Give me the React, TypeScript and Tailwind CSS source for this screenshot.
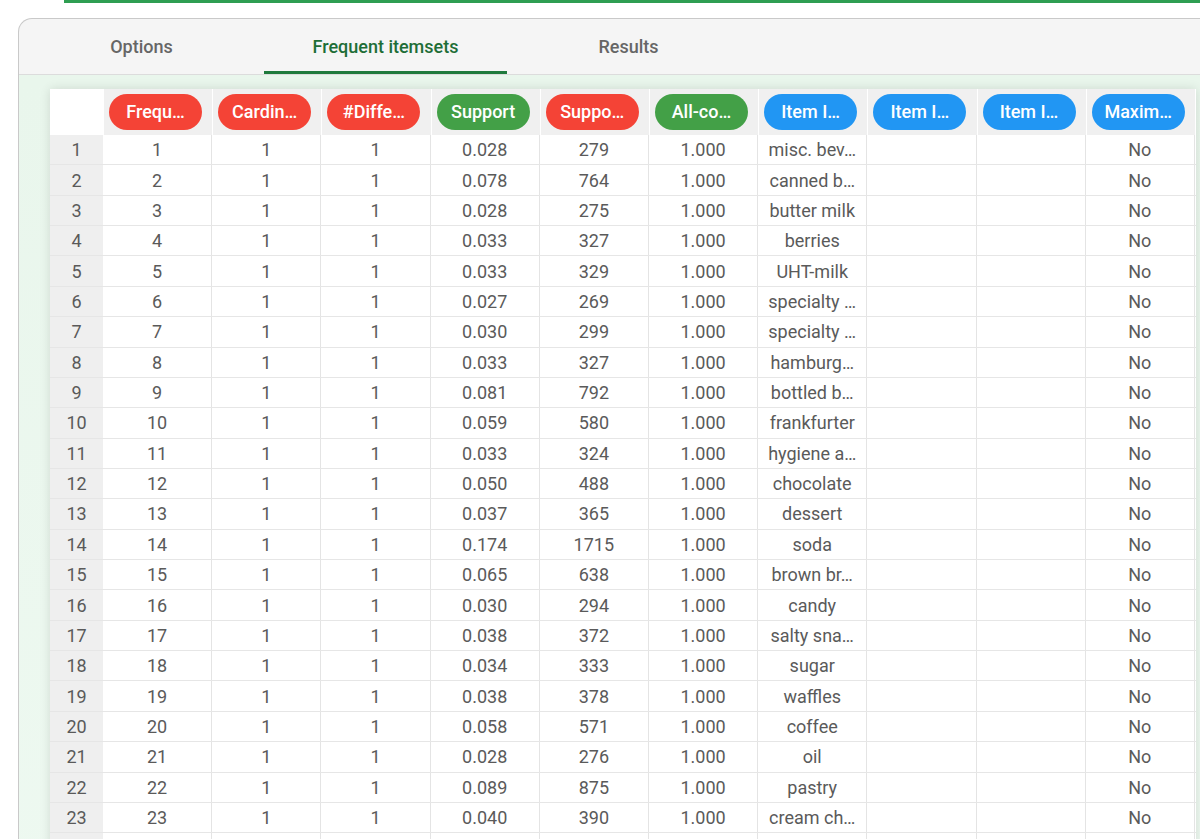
import React from 'react';

type Pill = { label: string; color: 'red' | 'green' | 'blue' };

const headers: Pill[] = [
  { label: 'Frequ…', color: 'red' },
  { label: 'Cardin…', color: 'red' },
  { label: '#Diffe…', color: 'red' },
  { label: 'Support', color: 'green' },
  { label: 'Suppo…', color: 'red' },
  { label: 'All-co…', color: 'green' },
  { label: 'Item I…', color: 'blue' },
  { label: 'Item I…', color: 'blue' },
  { label: 'Item I…', color: 'blue' },
  { label: 'Maxim…', color: 'blue' },
];

const pillColor = {
  red: 'bg-[#f44336]',
  green: 'bg-[#43a047]',
  blue: 'bg-[#2196f3]',
};

// [support, count, item]
const rows: [string, string, string][] = [
  ['0.028', '279', 'misc. bev…'],
  ['0.078', '764', 'canned b…'],
  ['0.028', '275', 'butter milk'],
  ['0.033', '327', 'berries'],
  ['0.033', '329', 'UHT-milk'],
  ['0.027', '269', 'specialty …'],
  ['0.030', '299', 'specialty …'],
  ['0.033', '327', 'hamburg…'],
  ['0.081', '792', 'bottled b…'],
  ['0.059', '580', 'frankfurter'],
  ['0.033', '324', 'hygiene a…'],
  ['0.050', '488', 'chocolate'],
  ['0.037', '365', 'dessert'],
  ['0.174', '1715', 'soda'],
  ['0.065', '638', 'brown br…'],
  ['0.030', '294', 'candy'],
  ['0.038', '372', 'salty sna…'],
  ['0.034', '333', 'sugar'],
  ['0.038', '378', 'waffles'],
  ['0.058', '571', 'coffee'],
  ['0.028', '276', 'oil'],
  ['0.089', '875', 'pastry'],
  ['0.040', '390', 'cream ch…'],
];

const cell = 'w-[109.2px] shrink-0 border-r border-[#e4e4e4] flex items-center justify-center';

const App: React.FC = () => {
  return (
    <div className="w-[1200px] h-[839px] overflow-hidden bg-white font-['Roboto',sans-serif]">
      {/* top accent */}
      <div className="ml-[64px] h-[3px] bg-[#2f9e52]" />

      {/* card */}
      <div className="ml-[18px] mt-[15px] w-[1200px] h-[900px] rounded-tl-[14px] border-l border-t border-[#c9c9c9] bg-[#f5f5f5]">
        {/* tabs */}
        <div className="flex h-[56px] border-b border-[#dcdcdc] text-[18px] font-medium">
          <div className="w-[245px] flex items-center justify-center text-[#666666]">Options</div>
          <div className="w-[243px] flex items-center justify-center text-[#1e6e37] relative">
            Frequent itemsets
            <div className="absolute left-0 right-0 bottom-0 h-[3px] bg-[#1e7a3c]" />
          </div>
          <div className="w-[243px] flex items-center justify-center text-[#666666]">Results</div>
        </div>

        {/* content */}
        <div className="bg-gradient-to-b from-[#e9f6ec] to-[#eef9f1] pl-[31px] pt-[14px] h-full">
          <div className="w-[1146px] bg-white shadow-[0_0_10px_rgba(0,0,0,0.12)] text-[18px] text-[#5a5a5a]">
            {/* header */}
            <div className="flex h-[46px]">
              <div className="w-[53px] shrink-0 bg-white" />
              {headers.map((h, i) => (
                <div key={i} className="w-[109.2px] shrink-0 bg-[#f0f0f0] border-l border-white flex items-center pl-[5px] pt-[-1px]">
                  <div className={`${pillColor[h.color]} w-[93px] h-[36px] -mt-[1px] rounded-full flex items-center justify-center text-white text-[18px] font-medium whitespace-nowrap`}>
                    {h.label}
                  </div>
                </div>
              ))}
            </div>

            {/* rows */}
            {rows.map((r, i) => (
              <div key={i} className="flex h-[30.36px] border-b border-[#e6e6e6]">
                <div className="w-[53px] shrink-0 bg-[#efefef] flex items-center justify-center">{i + 1}</div>
                <div className={cell}>{i + 1}</div>
                <div className={cell}>1</div>
                <div className={cell}>1</div>
                <div className={cell}>{r[0]}</div>
                <div className={cell}>{r[1]}</div>
                <div className={cell}>1.000</div>
                <div className={`${cell} whitespace-nowrap`}>{r[2]}</div>
                <div className={cell} />
                <div className={cell} />
                <div className={cell}>No</div>
              </div>
            ))}
            {/* next row, scrolled out of view */}
            <div className="flex h-[30.36px] border-b border-[#e6e6e6]">
              <div className="w-[53px] shrink-0 bg-[#efefef]" />
              {headers.map((_, i) => (
                <div key={i} className={cell} />
              ))}
            </div>
          </div>
        </div>
      </div>
    </div>
  );
};

export default App;
